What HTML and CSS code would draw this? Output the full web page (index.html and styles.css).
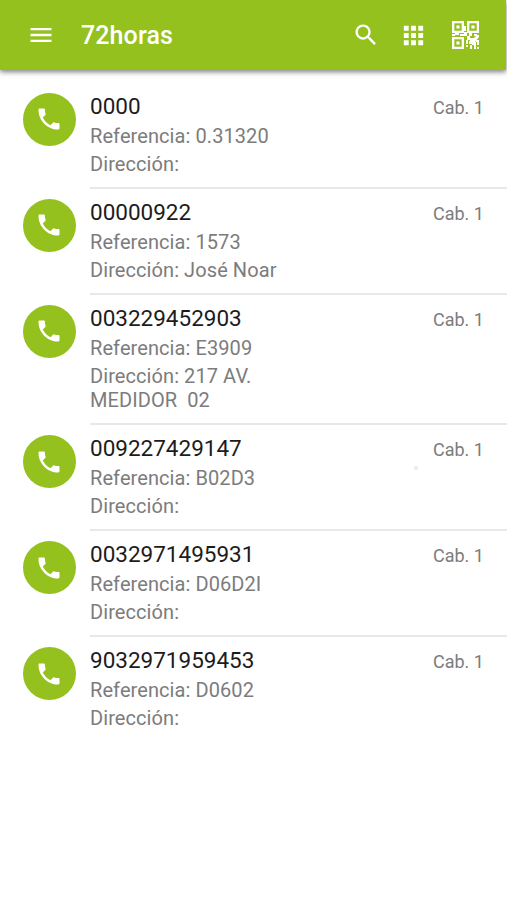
FILE: index.html
```
<!DOCTYPE html>
<html lang="es">
<head>
<meta charset="utf-8">
<title>72horas</title>
<link rel="stylesheet" href="styles.css">
</head>
<body>
<svg width="0" height="0" class="defs"><symbol id="phone" viewBox="0 0 24 24"><path d="M6.62 10.79c1.44 2.83 3.76 5.14 6.59 6.59l2.2-2.2c.27-.27.67-.36 1.02-.24 1.12.37 2.33.57 3.57.57.55 0 1 .45 1 1V20c0 .55-.45 1-1 1-9.39 0-17-7.61-17-17 0-.55.45-1 1-1h3.5c.55 0 1 .45 1 1 0 1.25.2 2.45.57 3.57.11.35.03.74-.25 1.02l-2.2 2.2z"/></symbol></svg>
<header class="bar">
  <svg class="menu" viewBox="0 0 24 24"><path d="M3 18h18v-2H3v2zm0-5h18v-2H3v2zm0-7v2h18V6H3z"/></svg>
  <h1>72horas</h1>
  <svg class="search" viewBox="0 0 24 24"><path d="M15.5 14h-.79l-.28-.27C15.41 12.59 16 11.11 16 9.5 16 5.91 13.09 3 9.5 3S3 5.91 3 9.5 5.91 16 9.5 16c1.61 0 3.09-.59 4.23-1.57l.27.28v.79l5 4.99L20.49 19l-4.99-5zm-6 0C7.01 14 5 11.99 5 9.5S7.01 5 9.5 5 14 7.01 14 9.5 11.99 14 9.5 14z"/></svg>
  <svg class="apps" viewBox="0 0 24 24"><path d="M4 8h4V4H4v4zm6 12h4v-4h-4v4zm-6 0h4v-4H4v4zm0-6h4v-4H4v4zm6 0h4v-4h-4v4zm6-10v4h4V4h-4zm-6 4h4V4h-4v4zm6 6h4v-4h-4v4zm0 6h4v-4h-4v4z"/></svg>
  <svg class="qr" viewBox="0 0 27 28"><path fill-rule="evenodd" d="M0 0h12v12H0zM2.300 2.300v7.400h7.400V2.300zM4.400 4.400h3.200v3.200H4.400zM15 0h12v12H15zM17.300 2.300v7.400h7.400V2.300zM19.400 4.400h3.200v3.200h-3.200zM0 16h12v12H0zM2.300 18.300v7.400h7.400v-7.400zM4.400 20.400h3.200v3.200H4.400z"/><path d="M3 12h4v2H3zM0 13h3v2H0zM8 13h4v2H8zM12 5h2v5h-2zM12 11h3v4h-3zM17 12h3v3h-3zM22 13h3v2h-3zM15 15h3v4h-3zM18 17h4v3h-4zM21 18l4-4h2v2l-4 5h-3zM14 19h2v4h-2zM17 20h4v3h-4zM20 21h4v3h-4zM24 19h3v2h-3zM25 21h2v3h-2zM14 24h2v2h-2zM18 24h2v4h-2zM22 24h2v4h-2zM25 26h2v2h-2z"/></svg>
</header>
<main>
  <article><span class="avatar"><svg><use href="#phone"/></svg></span><div class="info"><h2>0000</h2><p>Referencia: 0.31320</p><p>Dirección:</p></div><span class="cab">Cab. 1</span></article>
  <article><span class="avatar"><svg><use href="#phone"/></svg></span><div class="info"><h2>00000922</h2><p>Referencia: 1573</p><p>Dirección: José Noar</p></div><span class="cab">Cab. 1</span></article>
  <article><span class="avatar"><svg><use href="#phone"/></svg></span><div class="info"><h2>003229452903</h2><p>Referencia: E3909</p><p>Dirección: 217 AV.<br>MEDIDOR&nbsp; 02</p></div><span class="cab">Cab. 1</span></article>
  <article><span class="avatar"><svg><use href="#phone"/></svg></span><div class="info"><h2>009227429147</h2><p>Referencia: B02D3</p><p>Dirección:</p></div><span class="cab">Cab. 1</span><i class="speck"></i></article>
  <article><span class="avatar"><svg><use href="#phone"/></svg></span><div class="info"><h2>0032971495931</h2><p>Referencia: D06D2I</p><p>Dirección:</p></div><span class="cab">Cab. 1</span></article>
  <article><span class="avatar"><svg><use href="#phone"/></svg></span><div class="info"><h2>9032971959453</h2><p>Referencia: D0602</p><p>Dirección:</p></div><span class="cab">Cab. 1</span></article>
</main>
</body>
</html>
```
FILE: styles.css
```
* { box-sizing: border-box; margin: 0; padding: 0; }
body { background: #fff; font-family: Roboto, "Liberation Sans", sans-serif; height: 900px; overflow: hidden; }
svg { display: block; flex: none; }
.defs { position: absolute; }
.bar { display: flex; align-items: center; width: 506px; height: 70px; padding-left: 26.5px; background: #95c11f; fill: #fff; box-shadow: 0 2px 5px rgba(0, 0, 0, .5); }
.bar h1 { flex: none; width: 271px; margin-left: 26.5px; padding-top: 2px; color: #fff; font-size: 25px; font-weight: 500; letter-spacing: .1px; line-height: 30px; }
.menu, .search { width: 28px; height: 28px; }
.apps { width: 29px; height: 29px; margin-left: 19px; }
.qr { width: 27px; height: 28px; margin-left: 24px; }
main { padding-top: 13px; }
article { position: relative; display: flex; padding-left: 22.5px; }
.avatar { display: grid; place-items: center; flex: none; width: 53.5px; height: 53.5px; margin: 9.700px 14px 0 0; border-radius: 50%; background: #95c11f; fill: #fff; }
.avatar svg { width: 28px; height: 28px; }
.info { flex: 1; padding: 9px 0 10.600px; border-bottom: 2px solid #e8e8e8; }
.info h2 { color: #1c1c1c; font-size: 22.5px; font-weight: 400; line-height: 28px; }
.info p { margin-top: 4px; color: #7c7c7c; font-size: 20px; letter-spacing: .08px; line-height: 24.200px; }
.cab { width: 74px; padding-top: 14px; border-bottom: 2px solid #e8e8e8; color: #7c7c7c; font-size: 18px; line-height: 22px; }
.speck { position: absolute; top: 41px; left: 414px; width: 4px; height: 4px; border-radius: 50%; background: #e9e9e9; }
article:last-child .info, article:last-child .cab { border: 0; }
```
